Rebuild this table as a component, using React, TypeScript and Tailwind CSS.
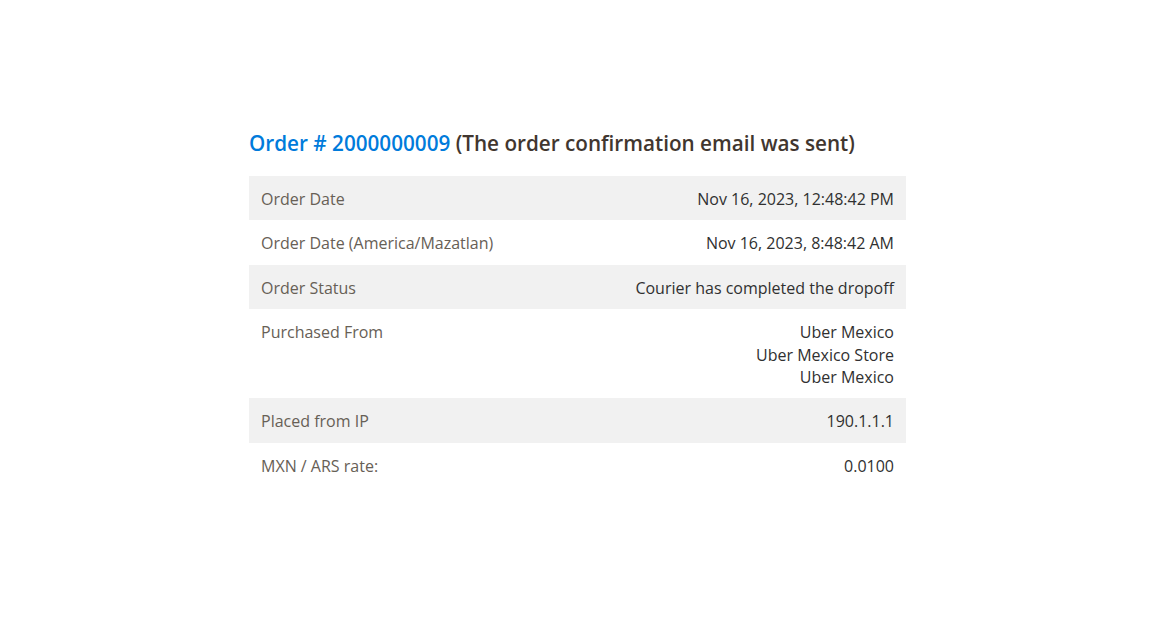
const rows: { label: string; value: string[] }[] = [
  { label: "Order Date", value: ["Nov 16, 2023, 12:48:42 PM"] },
  { label: "Order Date (America/Mazatlan)", value: ["Nov 16, 2023, 8:48:42 AM"] },
  { label: "Order Status", value: ["Courier has completed the dropoff"] },
  { label: "Purchased From", value: ["Uber Mexico", "Uber Mexico Store", "Uber Mexico"] },
  { label: "Placed from IP", value: ["190.1.1.1"] },
  { label: "MXN / ARS rate:", value: ["0.0100"] },
];

export default function App() {
  return (
    <div className="min-h-[633px] w-full bg-white font-['Open_Sans',sans-serif]">
      <div className="ml-[249px] w-[657px] pt-[129px]">
        <h1 className="text-[20.7px] font-semibold leading-[28px] text-[#41362f]">
          <span className="text-[#007bdb]">Order # 2000000009</span> (The order confirmation email was sent)
        </h1>
        <table className="mt-[19px] w-full border-collapse text-[16px] leading-[1.4]">
          <tbody>
            {rows.map((r, i) => (
              <tr key={i} className={i % 2 === 0 ? "bg-[#f1f1f1]" : "bg-white"}>
                <th className="px-[12px] pt-[12px] pb-[10px] text-left align-top font-normal text-[#676056]">
                  {r.label}
                </th>
                <td className="px-[12px] pt-[12px] pb-[10px] text-right align-top text-[#303030]">
                  {r.value.map((v, j) => (
                    <div key={j}>{v}</div>
                  ))}
                </td>
              </tr>
            ))}
          </tbody>
        </table>
      </div>
    </div>
  );
}
